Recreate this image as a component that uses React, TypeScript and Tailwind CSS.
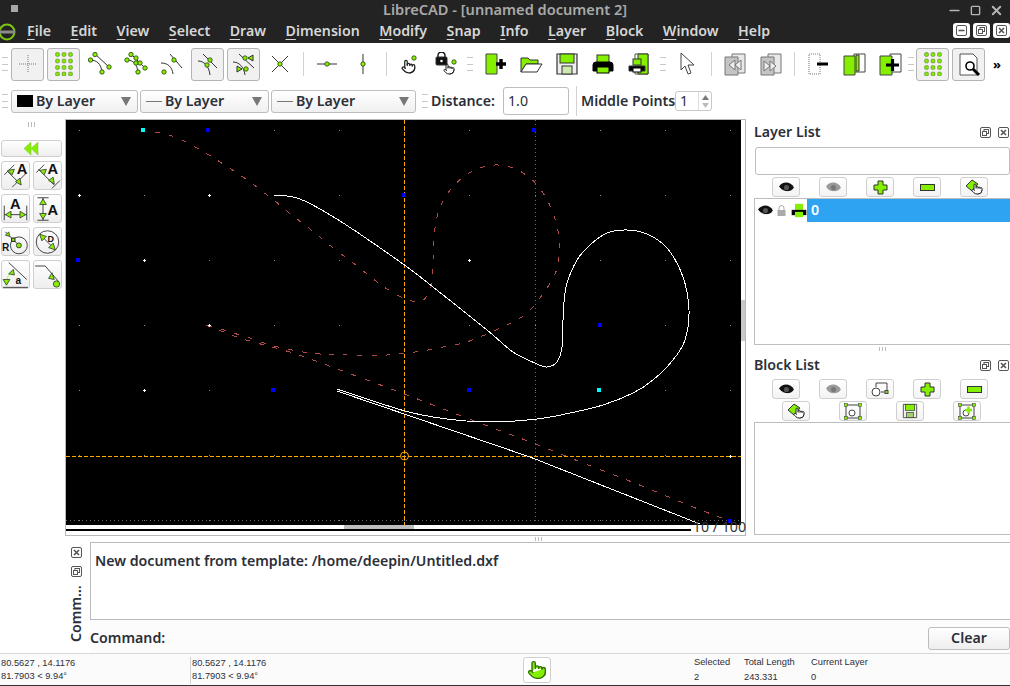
import type { ReactNode } from "react";
import { Pointer, X, Minus, Square } from "lucide-react";

const GREEN = "#84f000";

// catmull-rom through the sampled points, curves come out smooth enough
const smooth = (p: number[][]) => {
  let d = `M${p[0][0]} ${p[0][1]}`;
  for (let i = 0; i < p.length - 1; i++) {
    const a = p[Math.max(i - 1, 0)], b = p[i], c = p[i + 1], e = p[Math.min(i + 2, p.length - 1)];
    d += `C${b[0] + (c[0] - a[0]) / 6} ${b[1] + (c[1] - a[1]) / 6} ${c[0] - (e[0] - b[0]) / 6} ${c[1] - (e[1] - b[1]) / 6} ${c[0]} ${c[1]}`;
  }
  return d;
};

const whiteSpline = [[274,195],[300,199],[340,221],[403,264],[433,287],[487,330],[513,352],[537,364],[547,367],[557,362],[562,347],[563,320],[566,287],[577,260],[590,245],[607,233],[627,230],[647,234],[667,248],[683,277],[689,310],[685,340],[673,360],[653,380],[633,393],[603,405],[570,413],[537,419],[490,422],[447,419],[405,411],[337,389]];
const redSpline = [[155,132],[175,137],[197,148],[220,162],[243,177],[262,191],[275,201],[288,212],[310,229],[332,247],[357,266],[377,282],[392,292],[408,300],[422,301],[430,290],[432,280],[433,260],[434,237],[438,213],[448,193],[462,178],[477,169],[495,165],[513,168],[530,178],[543,193],[553,213],[559,238],[558,263],[553,278],[540,298],[527,313],[513,322],[500,328],[480,337],[463,343],[443,347],[422,351],[387,355],[347,355],[320,354],[297,351],[270,345],[247,337],[233,333],[218,328],[206,325]];
const redLine = [[206,325],[243,339],[293,353],[340,370],[407,395],[477,422],[533,443],[573,459],[637,484],[693,507],[722,518]];

const gridX = [79, 144, 209, 274, 339, 404, 469, 535, 600, 665, 730];
const gridY = [130, 195, 260, 325, 390, 455, 520];
const blue = [[208,130],[534,130],[404,195],[78,260],[600,325],[273,390],[469,390],[730,521]];
const cyan = [[143,130],[599,390]];
const plus = [[79,195],[209,195],[144,260],[469,260],[209,325],[144,390],[730,456]];

const I = ({ children, size = 24 }: { children: ReactNode; size?: number }) => (
  <svg width={size} height={size} viewBox="0 0 24 24" fill="none" stroke="#333" strokeWidth="1">{children}</svg>
);
const D = ({ x, y }: { x: number; y: number }) => <circle cx={x} cy={y} r="2.2" fill={GREEN} stroke="#2a3a10" strokeWidth="0.8" />;

const Cross = () => <I><path d="M3 12H21M12 3V21" stroke="#777" strokeDasharray="1 1" /></I>;
const GridDots = () => (
  <I>{[2.5, 9, 15.5, 22].flatMap((y) => [5.5, 12, 18.5].map((x) => <rect key={`${x}-${y}`} x={x - 1.8} y={y - 1.8} width="3.6" height="3.6" rx="0.8" fill={GREEN} stroke="#55771c" strokeWidth="0.6" />))}</I>
);
const SnapEnd = () => <I><path d="M2 8C9 8 13 12 14 20M7 2L21 15" /><D x={7} y={2.5} /><D x={2.5} y={8} /><D x={21} y={15} /><D x={14} y={20} /></I>;
const SnapEntity = () => <I><path d="M3 8C9 8 13 12 14 20M7 2L21 16" /><D x={7} y={2.5} /><D x={3} y={8} /><D x={12} y={6} /><D x={12} y={11} /><D x={16} y={11} /><D x={21} y={16} /><D x={14} y={20} /></I>;
const SnapCenter = () => <I><path d="M1 11C8 11 12 15 13 22M10 2L22 16" /><D x={14} y={8} /><D x={4} y={20} /></I>;
const SnapMiddle = () => <I><path d="M2 9C8 9 13 14 14 23M7 2L21 16" /><D x={14} y={8} /><D x={11} y={13} /></I>;
const SnapDist = () => (
  <I>
    <path d="M1 10C7 10 12 15 13 23M7 2L22 16" />
    <D x={13} y={6} /><D x={14} y={17} />
    <path d="M21 3V9L16 6Z" fill={GREEN} /><path d="M5 14V20L10 17Z" fill={GREEN} />
  </I>
);
const SnapX = () => <I><path d="M4 4L20 20M20 4L4 20" /><D x={12} y={12} /></I>;
const OrthoH = () => <I><path d="M2 12H22" /><D x={12} y={12} /></I>;
const OrthoV = () => <I><path d="M12 2V22" /><D x={12} y={12} /></I>;
const HandDot = () => (
  <I><svg x="3" y="7" width="15" height="15" viewBox="0 0 24 24"><Pointer stroke="#222" strokeWidth="2" /></svg><D x={16} y={6} /></I>
);
const LockHand = () => (
  <I>
    <path d="M4 5V3.5a3.5 3.5 0 0 1 7 0V5" stroke="#111" strokeWidth="1.4" />
    <rect x="2" y="5" width="11" height="8" rx="1" fill="#111" />
    <circle cx="7.5" cy="9" r="1.3" fill="#fff" stroke="none" />
    <svg x="9" y="11" width="12" height="12" viewBox="0 0 24 24"><Pointer stroke="#222" strokeWidth="2" /></svg>
    <D x={20} y={10} />
  </I>
);
const NewFile = () => (
  <I><path d="M3 2H14V22H3Z" fill={GREEN} stroke="#444" /><path d="M13 12H23M18 7V17" stroke="#000" strokeWidth="3.4" /></I>
);
const Folder = () => <I><path d="M2 20V6H9L11 8H19V12H7L2 20Z" fill={GREEN} stroke="#333" /><path d="M2 20L7 12H23L18 20Z" fill="#fff" stroke="#333" /></I>;
const Floppy = () => (
  <I><path d="M2 2H22V22H2Z" fill="#eee" stroke="#333" strokeWidth="1.2" /><rect x="5" y="2" width="14" height="9" fill={GREEN} stroke="#333" /><rect x="7" y="14" width="10" height="8" fill="#cfe8b0" stroke="#333" /></I>
);
const Printer = () => (
  <I><rect x="6" y="3" width="12" height="9" fill={GREEN} stroke="#333" /><path d="M2 13Q2 10 5 10H19Q22 10 22 13V19H2Z" fill="#000" stroke="#000" /><rect x="6" y="15" width="12" height="6" fill={GREEN} stroke="#000" /></I>
);
const Preview = () => (
  <I>
    <path d="M8 2H21V22H8Z" fill="#fff" stroke="#555" /><path d="M11 2H21V22H11Z" fill={GREEN} />
    <rect x="6" y="7" width="8" height="6" fill={GREEN} stroke="#333" /><path d="M2 14H18V19H2Z" fill="#000" /><rect x="6" y="16" width="8" height="4" fill="#fff" stroke="#000" />
  </I>
);
const Arrow = () => <I><path d="M5 1L5 18L9 14L12 22L15 21L12 13L18 13Z" fill="#fff" stroke="#444" /></I>;
const UndoPage = ({ flip }: { flip?: boolean }) => (
  <I>
    <path d="M9 2H22V21H9Z" fill="#e8e8e8" stroke="#777" />
    <path d="M2 5H15V23H2Z" fill="#c4c4c4" stroke="#777" />
    {flip ? <path d="M5 9L11 14L5 19ZM11 9L17 14L11 19Z" fill="#eee" stroke="#777" /> : <path d="M12 8L6 13L12 18ZM18 8L12 13L18 18Z" fill="#eee" stroke="#777" />}
  </I>
);
const PageMinus = () => <I><path d="M3 2H14V22H3Z" fill="#fff" stroke="#777" strokeDasharray="1 1" /><path d="M11 12H22" stroke="#000" strokeWidth="3" /></I>;
const TwoPages = () => <I><path d="M12 2H23V20H12Z" fill="#fff" stroke="#444" /><path d="M14 3H17V19H14Z" fill={GREEN} /><path d="M2 4H13V23H2Z" fill={GREEN} stroke="#444" /></I>;
const TwoPagesPlus = () => (
  <I><path d="M12 2H23V20H12Z" fill="#fff" stroke="#444" /><path d="M2 4H14V23H2Z" fill={GREEN} stroke="#444" /><path d="M8 13H21M14.5 7V19" stroke="#000" strokeWidth="3.2" /></I>
);
const PageZoom = () => (
  <I><path d="M3 2H16L20 6V23H3Z" fill="#fff" stroke="#555" /><circle cx="13" cy="14" r="4" fill="#fff" stroke="#000" strokeWidth="1.6" /><path d="M16 17L22 23" stroke="#000" strokeWidth="3" /></I>
);

const Handle = ({ h = 14 }: { h?: number }) => (
  <div className="w-[6px] flex items-center justify-center shrink-0">
    <div className="w-[6px] border-y border-[#c8c8c8] flex flex-col justify-between" style={{ height: h }}>
      <div className="h-px bg-[#c8c8c8] my-auto" />
    </div>
  </div>
);
const Sep = () => <div className="w-[8px] h-[24px] flex justify-center shrink-0"><div className="w-px h-full bg-[#d2d2d2]" /></div>;
const Tool = ({ on, children }: { on?: boolean; children: ReactNode }) => (
  <div className={`w-[33px] h-[33px] shrink-0 flex items-center justify-center rounded-[3px] ${on ? "border border-[#b4b4b4] bg-[#f1f1f1]" : ""}`}>{children}</div>
);

const Combo = ({ w, swatch, line, label }: { w: string; swatch?: boolean; line?: boolean; label: string }) => (
  <div className={`${w} h-[23px] shrink-0 flex items-center rounded-[3px] border border-[#bdbdbd] bg-gradient-to-b from-white to-[#f0f0f0] pl-[5px] pr-[6px]`}>
    {swatch && <div className="w-[16px] h-[12px] bg-black mr-[3px]" />}
    {line && <div className="w-[16px] h-px bg-[#777] mr-[3px]" />}
    <span className="flex-1 text-[14.2px] font-semibold text-[#2b2f38] leading-none whitespace-nowrap">{label}</span>
    <svg width="10" height="9" viewBox="0 0 10 9"><path d="M0 0H10L5 9Z" fill="#777" /></svg>
  </div>
);

const Dim = ({ children }: { children: ReactNode }) => (
  <div className="h-[29px] rounded-[3px] border border-[#cfcfcf] bg-gradient-to-b from-white to-[#eeeeee] flex items-center justify-center">{children}</div>
);
const A = ({ x, y, t = "A", s = 13 }: { x: number; y: number; t?: string; s?: number }) => (
  <text x={x} y={y} fontSize={s} fontWeight="700" fill="#111" stroke="none" fontFamily="'Liberation Sans', sans-serif">{t}</text>
);
const Tri = ({ d }: { d: string }) => <path d={d} fill={GREEN} stroke="#333" strokeWidth="0.7" />;

const Small = ({ children }: { children: ReactNode }) => (
  <div className="w-[28px] h-[20px] shrink-0 rounded-[3px] border border-[#cfcfcf] bg-gradient-to-b from-white to-[#f3f3f3] flex items-center justify-center">{children}</div>
);
const Eye = ({ gray }: { gray?: boolean }) => (
  <svg width="17" height="13" viewBox="0 0 16 12">
    <path d="M1 5C4 0 12 0 15 6C12 11 4 11 1 5Z" fill={gray ? "#9a9a9a" : "#111"} />
    <circle cx="8" cy="6" r="2.4" fill={gray ? "#777" : "#555"} />
    {!gray && <path d="M1 6C4 9 7 10 9 10" stroke="#fff" strokeWidth="0.8" fill="none" />}
  </svg>
);
const GreenPlus = () => <svg width="15" height="15" viewBox="0 0 15 15"><path d="M5 1H10V5H14V10H10V14H5V10H1V5H5Z" fill={GREEN} stroke="#333" /></svg>;
const GreenMinus = () => <svg width="15" height="7" viewBox="0 0 15 7"><rect x="0.5" y="0.5" width="14" height="6" fill={GREEN} stroke="#333" /></svg>;
const EditHand = () => (
  <svg width="18" height="16" viewBox="0 0 18 16">
    <path d="M1 7L7 1L13 5L7 12Z" fill={GREEN} stroke="#333" />
    <svg x="6" y="4" width="12" height="12" viewBox="0 0 24 24"><Pointer stroke="#222" strokeWidth="2" fill="#fff" /></svg>
  </svg>
);
const Corners = ({ children }: { children?: ReactNode }) => (
  <svg width="18" height="17" viewBox="0 0 18 17" fill="none">
    <rect x="2" y="2" width="14" height="13" stroke="#444" />
    <circle cx="8" cy="10" r="3" stroke="#444" fill="#fff" />
    {children}
    {[[2, 2], [16, 2], [2, 15], [16, 15]].map(([x, y]) => <rect key={`${x}${y}`} x={x - 1.5} y={y - 1.5} width="3" height="3" fill={GREEN} stroke="#333" strokeWidth="0.5" />)}
  </svg>
);
const FloatIcons = () => (
  <div className="flex items-center gap-[7px]">
    <FloatBtn />
    <CloseBtn />
  </div>
);
const FloatBtn = () => <svg width="11" height="11" viewBox="0 0 11 11" fill="none" stroke="#555"><rect x="0.5" y="0.5" width="10" height="10" rx="1.5" /><rect x="4" y="2.5" width="4.5" height="4" /><rect x="2.5" y="4.5" width="4" height="4" fill="#fff" /></svg>;
const CloseBtn = () => <svg width="11" height="11" viewBox="0 0 11 11" fill="none" stroke="#555"><rect x="0.5" y="0.5" width="10" height="10" rx="1.5" /><path d="M3 3L8 8M8 3L3 8" strokeWidth="1.6" /></svg>;

const menu = ["File", "Edit", "View", "Select", "Draw", "Dimension", "Modify", "Snap", "Info", "Layer", "Block", "Window", "Help"];

export default function App() {
  return (
    <div className="w-[1010px] h-[686px] overflow-hidden flex flex-col bg-white text-[#2b2f38] font-['Noto_Sans','Open_Sans',sans-serif]">
      {/* Title bar */}
      <div className="h-[21px] shrink-0 bg-[#232323] relative flex items-center justify-center pb-[2px]">
        <div className="absolute left-[11px] top-[5px] w-[7px] h-[7px] bg-[#a8a8a8]" />
        <span className="text-[14.6px] font-semibold leading-none text-[#a9a9a9]">LibreCAD - [unnamed document 2]</span>
        <div className="absolute right-[6px] top-[3px] flex items-center gap-[7px] text-[#b5b5b5]">
          <Minus size={15} strokeWidth={2.5} />
          <Square size={11} strokeWidth={3} className="mx-[1px]" />
          <X size={15} strokeWidth={3} />
        </div>
      </div>

      {/* Menu bar */}
      <div className="h-[22px] shrink-0 bg-[#232323] flex items-center relative pb-[2px]">
        <svg width="16" height="20" viewBox="0 0 16 20" fill="none" className="absolute left-0 top-px">
          <circle cx="7" cy="10" r="7.5" stroke="#7bc60e" strokeWidth="2" />
          <path d="M0 10H15" stroke="#8a8a8a" strokeWidth="3" />
        </svg>
        <div className="flex items-center pl-[27px] gap-[19.5px] text-[14.2px] font-semibold leading-none text-[#d6d6d6]">
          {menu.map((m) => (
            <span key={m}><span className="underline underline-offset-[3px]">{m[0]}</span>{m.slice(1)}</span>
          ))}
        </div>
        <div className="absolute right-0 top-[2px] flex gap-[3px]">
          {["min", "float", "close"].map((k) => (
            <div key={k} className="w-[17px] h-[15px] rounded-[3px] bg-white flex items-center justify-center">
              {k === "min" && <svg width="11" height="11" viewBox="0 0 11 11" fill="none" stroke="#555"><rect x="0.5" y="0.5" width="10" height="10" rx="1.5" /><path d="M2.5 5.5H8.5" strokeWidth="1.6" /></svg>}
              {k === "float" && <FloatBtn />}
              {k === "close" && <CloseBtn />}
            </div>
          ))}
        </div>
      </div>

      {/* Main toolbar */}
      <div className="h-[42px] shrink-0 flex items-center pl-[2px] gap-[3px] bg-white">
        <Handle />
        <Tool on><Cross /></Tool>
        <Tool on><GridDots /></Tool>
        <Tool><SnapEnd /></Tool>
        <Tool><SnapEntity /></Tool>
        <Tool><SnapCenter /></Tool>
        <Tool on><SnapMiddle /></Tool>
        <Tool on><SnapDist /></Tool>
        <Tool><SnapX /></Tool>
        <Sep />
        <Tool><OrthoH /></Tool>
        <Tool><OrthoV /></Tool>
        <Sep />
        <Tool><HandDot /></Tool>
        <Tool><LockHand /></Tool>
        <div className="w-[10px] flex justify-center shrink-0"><Handle /></div>
        <Tool><NewFile /></Tool>
        <Tool><Folder /></Tool>
        <Tool><Floppy /></Tool>
        <Tool><Printer /></Tool>
        <Tool><Preview /></Tool>
        <div className="w-[10px] flex justify-center shrink-0"><Handle /></div>
        <Tool><Arrow /></Tool>
        <Sep />
        <Tool><UndoPage /></Tool>
        <Tool><UndoPage flip /></Tool>
        <Sep />
        <Tool><PageMinus /></Tool>
        <Tool><TwoPages /></Tool>
        <Tool><TwoPagesPlus /></Tool>
        <div className="w-[4px] flex justify-center shrink-0"><Handle /></div>
        <Tool on><GridDots /></Tool>
        <Tool on><PageZoom /></Tool>
        <span className="ml-[5px] text-[13px] font-bold leading-none text-black">»</span>
      </div>

      {/* Pen + snap options toolbar */}
      <div className="h-[34px] shrink-0 flex items-center pl-[2px] pb-[2px] bg-white">
        <Handle />
        <div className="w-[3px]" />
        <Combo w="w-[127px]" swatch label="By Layer" />
        <div className="w-[2px]" />
        <Combo w="w-[129px]" line label="By Layer" />
        <div className="w-[2px]" />
        <Combo w="w-[145px]" line label="By Layer" />
        <div className="w-[6px]" />
        <Handle />
        <span className="ml-[3px] w-[64px] text-[14.2px] font-semibold leading-none">Distance:</span>
        <div className="ml-[8px] w-[66px] h-[28px] rounded-[3px] border border-[#bdbdbd] flex items-center pl-[4px] text-[14.2px] leading-none">1.0</div>
        <div className="ml-[7px] w-px h-[30px] bg-[#d2d2d2]" />
        <span className="ml-[4px] w-[94px] whitespace-nowrap text-[14.2px] font-semibold leading-none">Middle Points</span>
        <div className="w-[37px] h-[20px] rounded-[3px] border border-[#c8c8c8] flex items-center pl-[4px] text-[14.2px] leading-none">
          <span className="flex-1">1</span>
          <div className="w-[13px] h-full border-l border-[#ddd] flex flex-col items-center justify-center gap-[3px]">
            <svg width="7" height="5" viewBox="0 0 7 5"><path d="M0 5L3.5 0L7 5Z" fill="#777" /></svg>
            <svg width="7" height="5" viewBox="0 0 7 5"><path d="M0 0L3.5 5L7 0Z" fill="#bbb" /></svg>
          </div>
        </div>
      </div>

      {/* Work area */}
      <div className="h-[417px] shrink-0 flex">
        {/* Dimension tools */}
        <div className="w-[65px] shrink-0 pl-px pr-[3px]">
          <div className="h-[21px] flex justify-center items-start pt-[3px]">
            <div className="flex gap-[2px]">
              <div className="w-px h-[5px] bg-[#bbb]" /><div className="w-px h-[5px] bg-[#bbb]" /><div className="w-px h-[5px] bg-[#bbb]" />
            </div>
          </div>
          <div className="h-[17px] rounded-[3px] border border-[#cfcfcf] bg-gradient-to-b from-white to-[#eeeeee] flex items-center justify-center">
            <svg width="15" height="13" viewBox="0 0 15 13"><path d="M7 0V13L0 6.5ZM14 0V13L7 6.5Z" fill={GREEN} stroke="#8ab84a" strokeWidth="0.5" /></svg>
          </div>
          <div className="mt-[4px] grid grid-cols-2 gap-x-[3px] gap-y-[4px]">
            <Dim><I size={28}><path d="M2 11L11 2M9 22L22 9M5 8L17 20" strokeWidth="0.8" /><Tri d="M5 7L11 6L9 11Z" /><Tri d="M17 20L16 14L12 17Z" transform="translate(1 -1)" /><A x={13} y={10} /></I></Dim>
            <Dim><I size={28}><path d="M2 9L9 2M16 23L23 16M4 6L18 20" strokeWidth="0.8" /><Tri d="M5 7L11 6L9 11Z" /><Tri d="M18 19L17 13L13 16Z" /><A x={12} y={10} /></I></Dim>
            <Dim><I size={28}><path d="M2 9V22M22 9V22M2 17H22" strokeWidth="0.8" /><Tri d="M3 17L8 14V20Z" /><Tri d="M21 17L16 14V20Z" /><A x={7} y={12} /></I></Dim>
            <Dim><I size={28}><path d="M3 2H13M3 22H13M8 2V22" strokeWidth="0.8" /><Tri d="M8 3L5 8H11Z" /><Tri d="M8 21L5 16H11Z" /><A x={12} y={17} /></I></Dim>
            <Dim><I size={28}><circle cx="15" cy="15" r="7.5" strokeWidth="0.8" /><path d="M3 3L15 15" strokeWidth="0.8" /><Tri d="M7 7L6 3L3 6Z" /><rect x="8.5" y="8.5" width="3" height="3" fill={GREEN} /><D x={15} y={15} /><A x={0} y={20} t="R" s={9} /></I></Dim>
            <Dim><I size={28}><circle cx="12" cy="12" r="10" strokeWidth="0.8" /><path d="M5 5L19 19" strokeWidth="0.8" /><Tri d="M5 5L11 7L7 11Z" /><Tri d="M19 19L13 17L17 13Z" /><A x={12} y={12} t="D" s={8} /></I></Dim>
            <Dim><I size={28}><path d="M6 1L22 16M1 23H23" strokeWidth="0.8" /><path d="M4 20Q4 12 10 8" stroke={GREEN} strokeDasharray="1 1" /><Tri d="M10 7L11 12L6 11Z" /><Tri d="M4 21L1 16H7Z" /><A x={12} y={20} t="a" s={9} /></I></Dim>
            <Dim><I size={28}><path d="M1 4H10L22 18" strokeWidth="0.8" /><Tri d="M18 16L13 15L16 10Z" /><circle cx="20" cy="20" r="2.8" fill={GREEN} stroke="#333" strokeWidth="0.7" /></I></Dim>
          </div>
        </div>

        {/* Drawing area */}
        <div className="w-[681px] shrink-0 border border-[#b8b8b8] flex relative">
          <div className="w-[675px] shrink-0 flex flex-col">
            <div className="h-[405px] bg-black">
              <svg width="675" height="405" viewBox="66 120 675 405" fill="none" shapeRendering="crispEdges" className="block">
                {gridX.flatMap((x) => gridY.map((y) => <rect key={`g${x}-${y}`} x={x} y={y} width="1" height="1" fill="#8a8a8a" />))}
                <path d="M535 120V524M66 520.5H741" stroke="#666" strokeDasharray="1 3" />
                <path d={smooth(redSpline)} stroke="#b04c4c" strokeDasharray="5 9" />
                <path d={smooth(redLine)} stroke="#b04c4c" strokeDasharray="5 9" />
                <path d="M404.5 120V525M66 456.5H741" stroke="#ffaa00" strokeDasharray="4 2" />
                <circle cx="404.5" cy="456" r="4" stroke="#ffaa00" shapeRendering="auto" />
                <path d={smooth(whiteSpline)} stroke="#fff" />
                <path d="M337 391L530 457L700 524" stroke="#fff" />
                {blue.map(([x, y]) => <rect key={`b${x}-${y}`} x={x - 2} y={y - 2} width="4" height="4" fill="#0000ff" />)}
                {cyan.map(([x, y]) => <rect key={`c${x}-${y}`} x={x - 2} y={y - 2} width="4" height="4" fill="#00ffff" />)}
                {plus.map(([x, y]) => <path key={`p${x}-${y}`} d={`M${x - 1} ${y + 0.5}H${x + 2}M${x + 0.5} ${y - 1}V${y + 2}`} stroke="#fff" />)}
              </svg>
            </div>
            {/* horizontal scroll bar */}
            <div className="w-[625px] h-[4px] bg-white relative">
              <div className="absolute left-[278px] top-0 w-[70px] h-[4px] bg-[#bdbdbd]" />
            </div>
            <div className="w-[625px] h-[2px] bg-black" />
            <div className="h-[4px] bg-white" />
          </div>
          <div className="flex-1 flex flex-col pt-[180px] bg-white">
            <div className="w-[4px] h-[41px] bg-[#c9c9c9]" />
          </div>
          <span className="absolute right-[-1px] bottom-[1px] text-[14.2px] leading-none text-[#333] whitespace-nowrap">10 / 100</span>
        </div>

        {/* Docks */}
        <div className="w-[264px] shrink-0 pl-[8px] flex flex-col">
          <div className="h-[28px] shrink-0 flex items-center justify-between pr-[1px] pb-[1px]">
            <span className="text-[14.2px] font-semibold leading-none">Layer List</span>
            <FloatIcons />
          </div>
          <div className="ml-px h-[28px] shrink-0 rounded-[3px] border border-[#bdbdbd]" />
          <div className="mt-[2px] h-[21px] shrink-0 pl-[18px] flex gap-[19px]">
            <Small><Eye /></Small>
            <Small><Eye gray /></Small>
            <Small><GreenPlus /></Small>
            <Small><GreenMinus /></Small>
            <Small><EditHand /></Small>
          </div>
          <div className="h-[147px] shrink-0 border border-r-0 border-[#bdbdbd]">
            <div className="h-[23px] flex items-center">
              <div className="w-[52px] flex items-center pl-[2px] gap-[3px]">
                <Eye />
                <svg width="9" height="11" viewBox="0 0 9 11" fill="none"><path d="M2 5V3a2.5 2.5 0 0 1 5 0V5" stroke="#aaa" /><rect x="0.5" y="5" width="8" height="6" fill="#aaa" /></svg>
                <svg width="16" height="17" viewBox="0 0 24 24" className="ml-[2px]"><rect x="6" y="2" width="12" height="9" fill={GREEN} /><path d="M1 11H23V19H1Z" fill="#000" /><rect x="6" y="14" width="12" height="8" fill={GREEN} /></svg>
              </div>
              <div className="flex-1 h-full bg-[#2ea3f2] text-white text-[14.2px] font-semibold leading-none flex items-center pl-[4px]">0</div>
            </div>
          </div>
          <div className="h-[7px] shrink-0 flex justify-center items-center gap-[2px]">
            <div className="w-px h-[4px] bg-[#bbb]" /><div className="w-px h-[4px] bg-[#bbb]" /><div className="w-px h-[4px] bg-[#bbb]" />
          </div>
          <div className="h-[27px] shrink-0 flex items-center justify-between pr-[1px] pb-[1px]">
            <span className="text-[14.2px] font-semibold leading-none">Block List</span>
            <FloatIcons />
          </div>
          <div className="h-[21px] shrink-0 pl-[18px] flex gap-[19px]">
            <Small><Eye /></Small>
            <Small><Eye gray /></Small>
            <Small><svg width="20" height="15" viewBox="0 0 20 15" fill="none" stroke="#444"><path d="M6 5V1H17V10H11" /><circle cx="6" cy="10" r="4" fill="#fff" /><rect x="15" y="8.5" width="3" height="3" fill={GREEN} /></svg></Small>
            <Small><GreenPlus /></Small>
            <Small><GreenMinus /></Small>
          </div>
          <div className="mt-px h-[21px] shrink-0 pl-[28px] flex gap-[29px]">
            <Small><EditHand /></Small>
            <Small><Corners /></Small>
            <Small><svg width="16" height="16" viewBox="0 0 24 24"><path d="M2 2H22V22H2Z" fill="#eee" stroke="#333" strokeWidth="1.2" /><rect x="5" y="2" width="14" height="9" fill={GREEN} stroke="#333" /><rect x="7" y="14" width="10" height="8" fill="#a6cf70" stroke="#333" /></svg></Small>
            <Small><Corners><path d="M7 7H14M10.5 3.5V10.5" stroke={GREEN} strokeWidth="2.5" /></Corners></Small>
          </div>
          <div className="flex-1 mb-px border border-r-0 border-[#bdbdbd]" />
        </div>
      </div>

      {/* Splitter */}
      <div className="h-[6px] shrink-0 flex justify-center items-center gap-[2px] pl-[66px]">
        <div className="w-px h-[4px] bg-[#bbb]" /><div className="w-px h-[4px] bg-[#bbb]" /><div className="w-px h-[4px] bg-[#bbb]" />
      </div>

      {/* Command dock */}
      <div className="h-[111px] shrink-0 flex pl-[71px]">
        <div className="w-[19px] shrink-0 flex flex-col items-start pt-[5px]">
          <CloseBtn />
          <div className="mt-[8px]"><FloatBtn /></div>
          <span className="mt-[8px] -ml-[4px] h-[60px] text-[14.2px] font-semibold leading-[17px] [writing-mode:vertical-rl] rotate-180 text-right">Comm…</span>
        </div>
        <div className="flex-1 flex flex-col">
          <div className="h-[78px] shrink-0 border border-r-0 border-[#bbbbbb] pl-[4px] pt-[8px] text-[14.2px] font-semibold leading-[20px]">New document from template: /home/deepin/Untitled.dxf</div>
          <div className="flex-1 flex items-center justify-between bg-[#fcfcfc] pt-[3px]">
            <span className="text-[14.2px] font-semibold leading-none">Command:</span>
            <div className="w-[82px] h-[23px] rounded-[3px] border border-[#bdbdbd] bg-gradient-to-b from-white to-[#eeeeee] flex items-center justify-center text-[14.2px] font-semibold leading-none">Clear</div>
          </div>
        </div>
      </div>

      {/* Status bar */}
      <div className="flex-1 border-t border-[#d8d8d8] border-b border-b-[#333] bg-[#fbfbfb] flex items-center pt-[1px] font-['Liberation_Sans',sans-serif] text-[9.3px] leading-[13px] text-[#2b2f38]">
        <div className="w-[190px] shrink-0 pl-px">
          <div>80.5627 , 14.1176</div>
          <div>81.7903 &lt; 9.94°</div>
        </div>
        <div className="w-[333px] shrink-0 h-[27px] border-l border-[#d2d2d2] pl-[1px]">
          <div>80.5627 , 14.1176</div>
          <div>81.7903 &lt; 9.94°</div>
        </div>
        <div className="w-[28px] h-[26px] shrink-0 rounded-[3px] border border-[#cfcfcf] bg-white flex items-center justify-center">
          <Pointer size={20} fill={GREEN} stroke="#2f6b00" strokeWidth={1.6} />
        </div>
        <div className="ml-[143px] w-[50px] shrink-0 leading-[15px]"><div>Selected</div><div>2</div></div>
        <div className="w-[67px] shrink-0 leading-[15px]"><div>Total Length</div><div>243.331</div></div>
        <div className="shrink-0 leading-[15px]"><div>Current Layer</div><div>0</div></div>
      </div>
    </div>
  );
}
